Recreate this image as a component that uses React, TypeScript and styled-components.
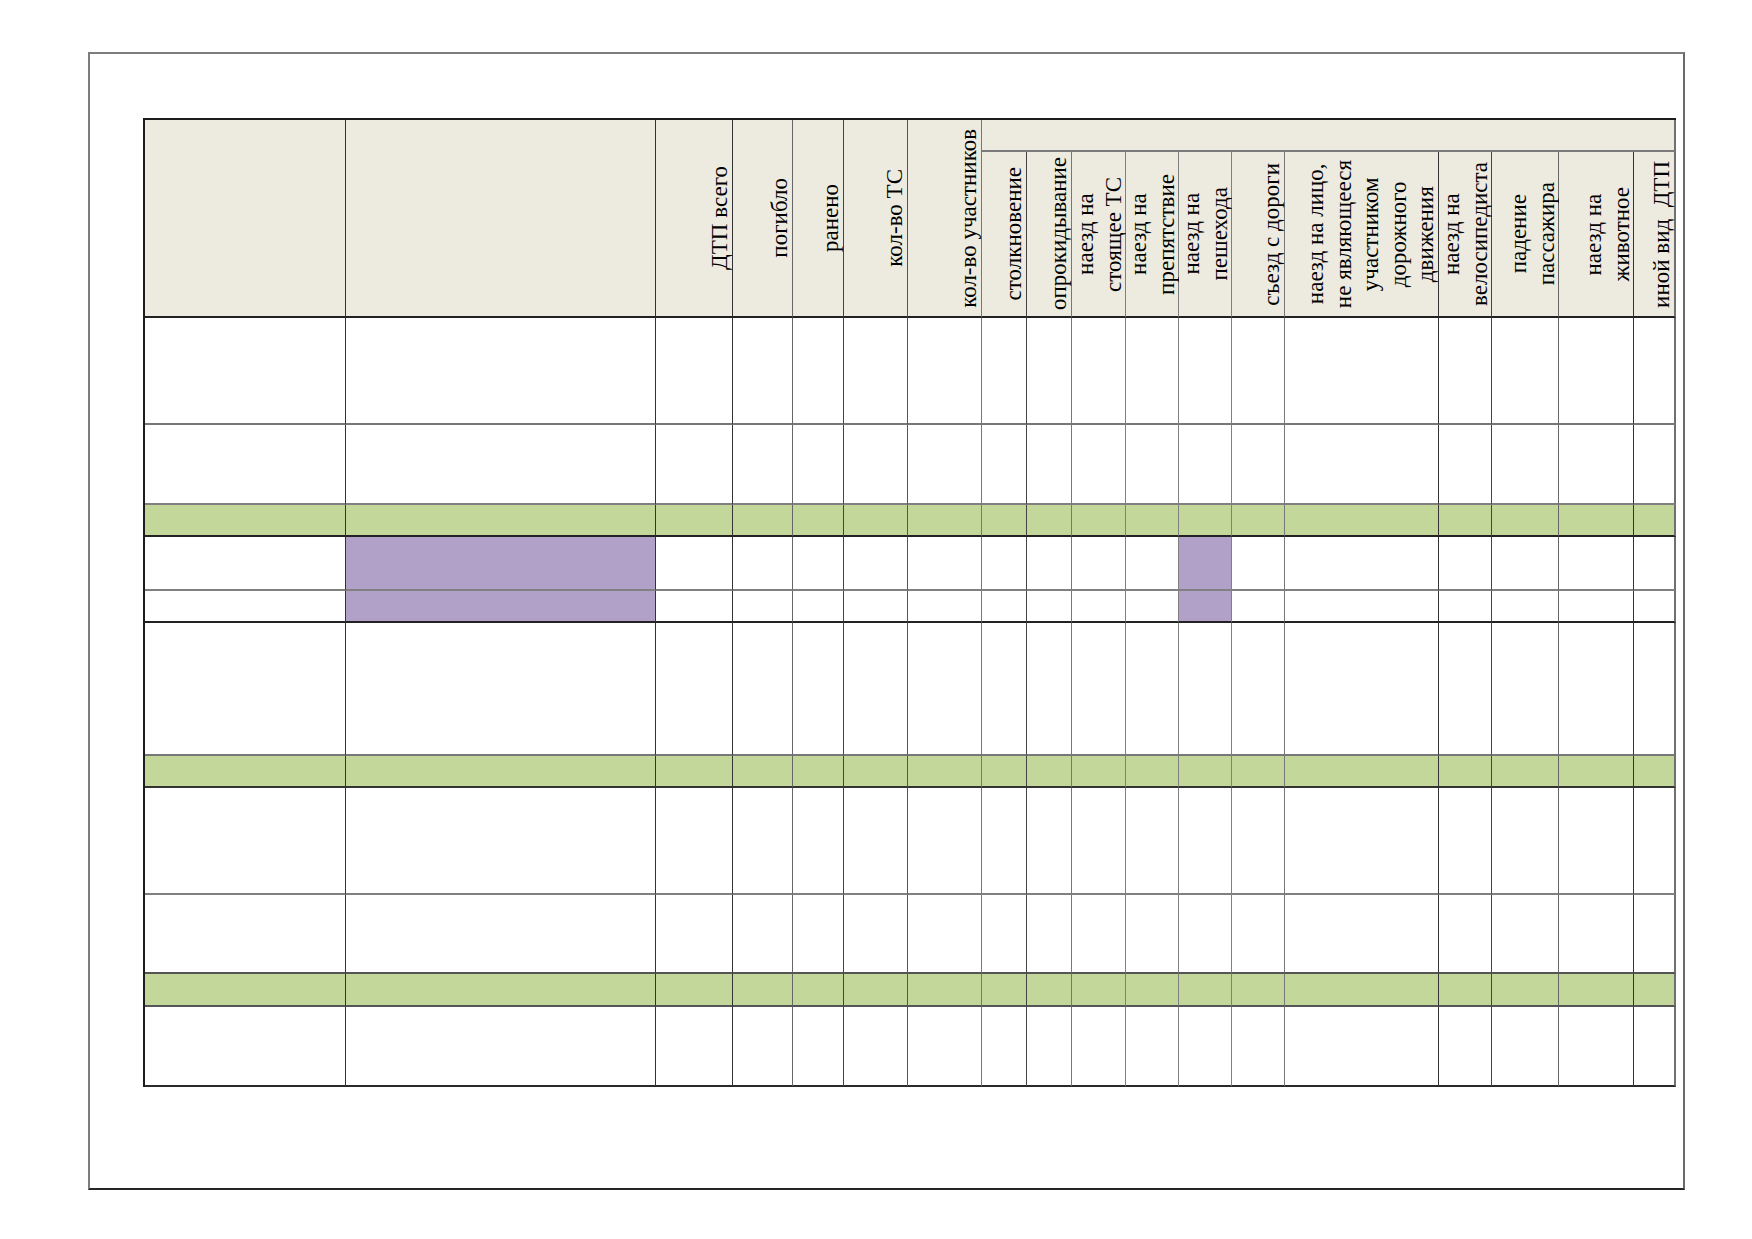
import React from "react";
import styled, { createGlobalStyle } from "styled-components";

const GlobalStyle = createGlobalStyle`
  html, body {
    margin: 0;
    padding: 0;
    background: #ffffff;
  }
  body {
    font-family: "Liberation Serif", "Times New Roman", serif;
    color: #000000;
  }
`;

const Canvas = styled.div`
  padding: 52px 0 0 88px;
`;

const Page = styled.div`
  box-sizing: border-box;
  width: 1597px;
  height: 1138px;
  border: 2px solid #7d7d7d;
  border-right-color: #6a6a6a;
  border-bottom-color: #262626;
  padding: 64px 0 0 53px;
  background: #ffffff;
`;

const Sheet = styled.div<{ $cols: string; $rows: string }>`
  display: grid;
  grid-template-columns: ${(p) => p.$cols};
  grid-template-rows: ${(p) => p.$rows};
  width: max-content;
  border-top: 2px solid #1c1c1c;
  border-left: 2px solid #1c1c1c;
`;

const Cell = styled.div<{
  $bg: string;
  $right: string;
  $rightW: number;
  $bottom: string;
}>`
  box-sizing: border-box;
  background: ${(p) => p.$bg};
  border-right: ${(p) => p.$rightW}px solid ${(p) => p.$right};
  border-bottom: 2px solid ${(p) => p.$bottom};
`;

const HeadCell = styled(Cell)<{ $rowSpan: number; $colSpan: number }>`
  grid-row: span ${(p) => p.$rowSpan};
  grid-column: span ${(p) => p.$colSpan};
  display: flex;
  align-items: center;
  justify-content: flex-end;
  min-width: 0;
  min-height: 0;
`;

const VText = styled.span`
  writing-mode: vertical-rl;
  transform: rotate(180deg);
  white-space: pre;
  text-align: center;
  font-family: "Liberation Serif", "Times New Roman", serif;
  font-size: 23px;
  line-height: 27.5px;
  margin-right: -2px;
  color: #000000;
`;

const HEAD_BG = "#edebe0";
const GREEN = "#c4d79b";
const PURPLE = "#b1a0c7";
const WHITE = "#ffffff";

const colWidths = [
  200.5, 310, 77, 60, 51, 64, 74, 45, 45, 54, 53, 53, 53, 154, 53.5, 66.5, 75,
  42,
];

const colLines = [
  "#333333",
  "#333333",
  "#333333",
  "#666666",
  "#444444",
  "#555555",
  "#777777",
  "#444444",
  "#777777",
  "#808080",
  "#808080",
  "#808080",
  "#777777",
  "#333333",
  "#444444",
  "#666666",
  "#333333",
  "#707070",
];

const lastCol = colWidths.length - 1;

const mainHeads = ["", "", "ДТП всего", "погибло", "ранено", "кол-во ТС", "кол-во участников"];

const subHeads = [
  "столкновение",
  "опрокидывание",
  "наезд на\nстоящее ТС",
  "наезд на\nпрепятствие",
  "наезд на\nпешехода",
  "съезд с дороги",
  "наезд на лицо,\nне являющееся\nучастником\nдорожного\nдвижения",
  "наезд на\nвелосипедиста",
  "падение\nпассажира",
  "наезд на\nживотное",
  "иной вид  ДТП",
];

type BodyRow = { h: number; green?: boolean; line: string; purple?: number[] };

const bodyRows: BodyRow[] = [
  { h: 107, line: "#777777" },
  { h: 80, line: "#808080" },
  { h: 32, green: true, line: "#222222" },
  { h: 54, line: "#808080", purple: [1, 11] },
  { h: 32, line: "#222222", purple: [1, 11] },
  { h: 133, line: "#777777" },
  { h: 32, green: true, line: "#333333" },
  { h: 107, line: "#808080" },
  { h: 79, line: "#555555" },
  { h: 33, green: true, line: "#555555" },
  { h: 80, line: "#2a2a2a" },
];

const headRows = [32, 166];

export default function App() {
  const cols = colWidths.map((w) => `${w}px`).join(" ");
  const rows = [...headRows, ...bodyRows.map((r) => r.h)].map((h) => `${h}px`).join(" ");

  return (
    <>
      <GlobalStyle />
      <Canvas>
        <Page>
          <Sheet $cols={cols} $rows={rows}>
            {mainHeads.map((t, i) => (
              <HeadCell
                key={`m${i}`}
                $rowSpan={2}
                $colSpan={1}
                $bg={HEAD_BG}
                $right={colLines[i]}
                $rightW={1}
                $bottom="#222222"
              >
                {t && <VText>{t}</VText>}
              </HeadCell>
            ))}
            <HeadCell
              $rowSpan={1}
              $colSpan={subHeads.length}
              $bg={HEAD_BG}
              $right={colLines[lastCol]}
              $rightW={2}
              $bottom="#7a7a7a"
            />
            {subHeads.map((t, j) => {
              const ci = mainHeads.length + j;
              return (
                <HeadCell
                  key={`s${j}`}
                  $rowSpan={1}
                  $colSpan={1}
                  $bg={HEAD_BG}
                  $right={colLines[ci]}
                  $rightW={ci === lastCol ? 2 : 1}
                  $bottom="#222222"
                >
                  <VText>{t}</VText>
                </HeadCell>
              );
            })}
            {bodyRows.map((r, ri) =>
              colWidths.map((_, ci) => {
                const bg = r.green
                  ? GREEN
                  : r.purple && r.purple.includes(ci)
                  ? PURPLE
                  : WHITE;
                return (
                  <Cell
                    key={`b${ri}-${ci}`}
                    $bg={bg}
                    $right={colLines[ci]}
                    $rightW={ci === lastCol ? 2 : 1}
                    $bottom={r.line}
                  />
                );
              })
            )}
          </Sheet>
        </Page>
      </Canvas>
    </>
  );
}
